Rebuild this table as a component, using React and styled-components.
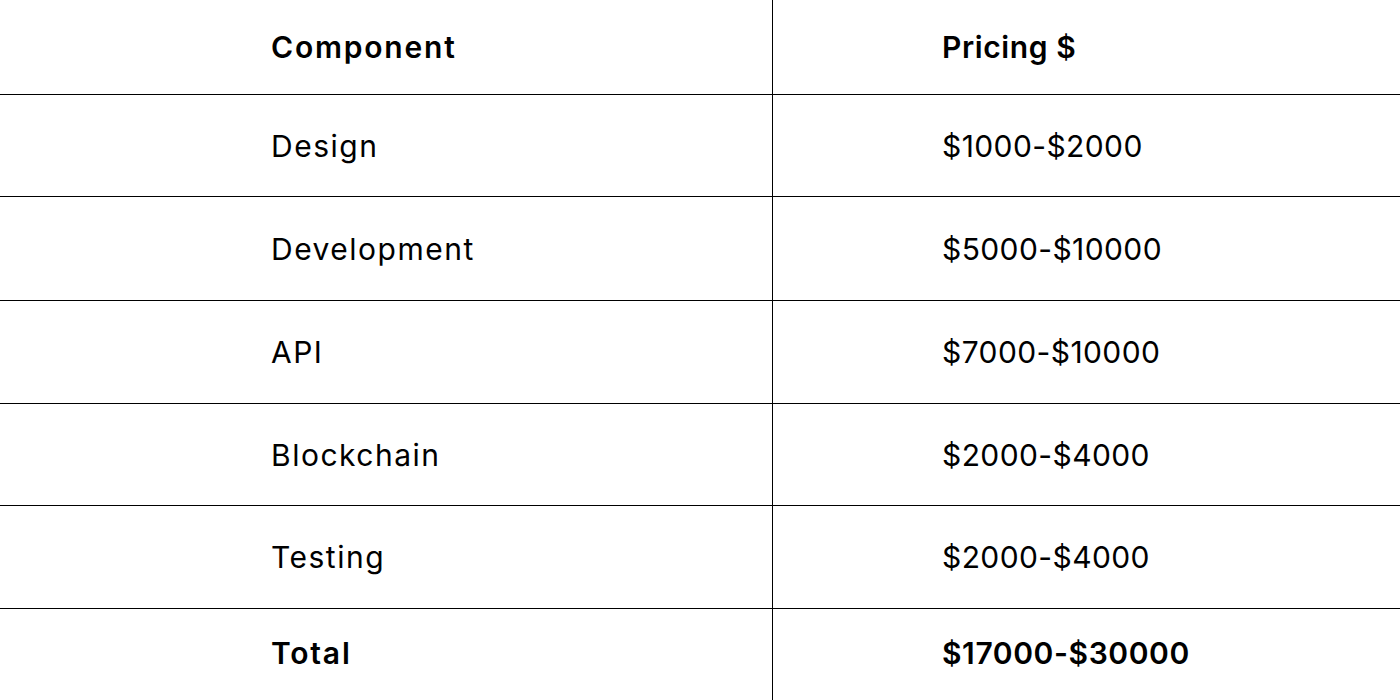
import styled, { createGlobalStyle } from "styled-components";

const GlobalStyle = createGlobalStyle`
  body {
    margin: 0;
    background: #fff;
    font-family: Inter, "Noto Sans", sans-serif;
    color: #000;
  }
`;

const Table = styled.div`
  width: 1400px;
  height: 700px;
  display: grid;
  grid-template-columns: 773px 1fr;
  grid-template-rows: 95px 102px 104px 103px 102px 103px 1fr;
  overflow: hidden;
`;

const Cell = styled.div`
  display: flex;
  align-items: center;
  padding-left: ${(p) => (p.$first ? "271px" : "169px")};
  border-right: ${(p) => (p.$first ? "1px solid #000" : "none")};
  border-bottom: ${(p) => (p.$last ? "none" : "1px solid #000")};
  font-size: 30px;
  font-weight: ${(p) => (p.$bold ? 600 : 400)};
  letter-spacing: ${(p) =>
    p.$first ? (p.$bold ? "1.8px" : "1.5px") : p.$bold ? "0.6px" : "0.4px"};
  padding-bottom: ${(p) => (p.$last ? "4px" : "0")};
  white-space: nowrap;
`;

const rows = [
  ["Design", "$1000-$2000"],
  ["Development", "$5000-$10000"],
  ["API", "$7000-$10000"],
  ["Blockchain", "$2000-$4000"],
  ["Testing", "$2000-$4000"],
];

const App = () => {
  return (
    <>
      <GlobalStyle />
      <Table>
        <Cell $first $bold>Component</Cell>
        <Cell $bold>Pricing $</Cell>
        {rows.map(([name, price]) => [
          <Cell key={name} $first>{name}</Cell>,
          <Cell key={name + "-price"}>{price}</Cell>,
        ])}
        <Cell $first $bold $last>Total</Cell>
        <Cell $bold $last>$17000-$30000</Cell>
      </Table>
    </>
  );
};

export default App;
